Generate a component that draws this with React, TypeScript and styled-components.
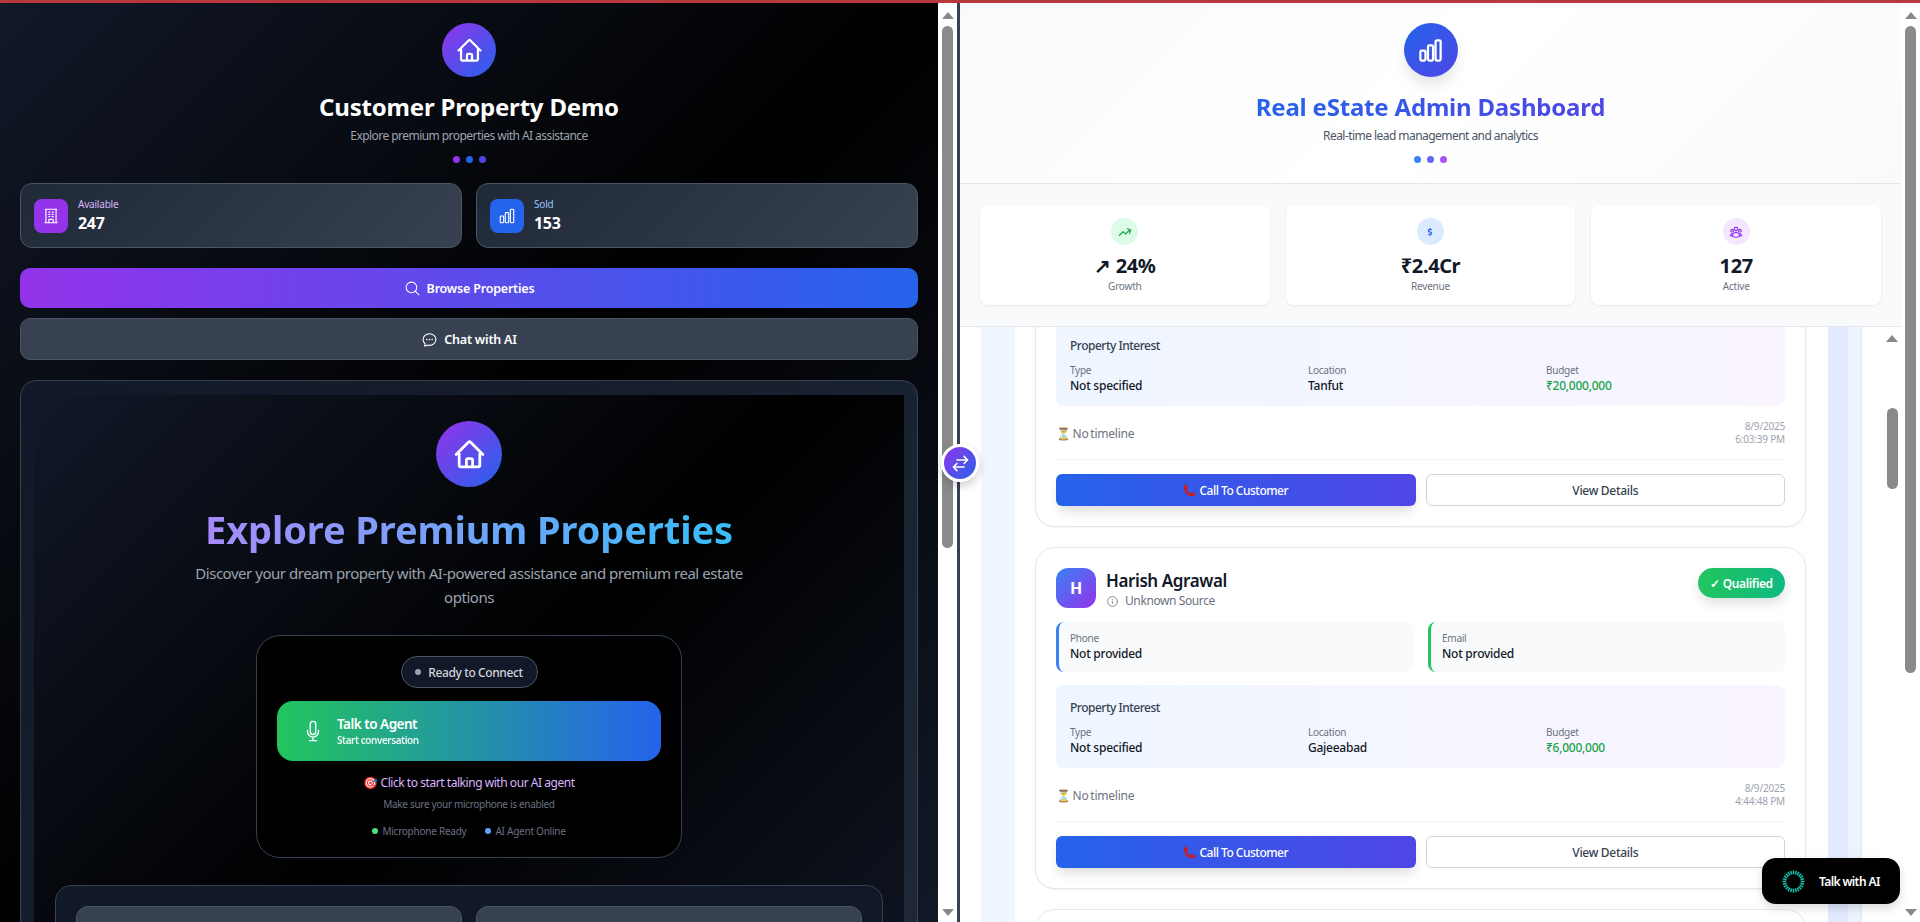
import React from 'react';
import styled, { createGlobalStyle } from 'styled-components';
import {
  HiOutlineHome,
  HiOutlineBuildingOffice,
  HiOutlineChartBar,
  HiOutlineMagnifyingGlass,
  HiOutlineChatBubbleOvalLeftEllipsis,
  HiOutlineMicrophone,
  HiOutlineArrowTrendingUp,
  HiOutlineUserGroup,
  HiOutlineInformationCircle,
  HiOutlineArrowsRightLeft,
  HiPhone,
} from 'react-icons/hi2';
import { FaDollarSign } from 'react-icons/fa';

const GlobalStyle = createGlobalStyle`
  html, body {
    margin: 0;
    height: 100%;
    overflow: hidden;
    background: #fff;
    font-family: "Noto Sans", "Open Sans", sans-serif;
  }
  * { box-sizing: border-box; }
`;

const Page = styled.div`
  position: relative;
  height: 922px;
  display: flex;
  flex-direction: column;
  overflow: hidden;
`;

const TopBar = styled.div`
  height: 3px;
  flex: none;
  background: #b9383e;
`;

const Split = styled.div`
  flex: 1;
  min-height: 0;
  display: flex;
`;

const DarkPane = styled.div`
  width: 938px;
  flex: none;
  overflow: hidden;
  padding: 20px 20px 0;
  background: linear-gradient(135deg, #111827 0%, #000 50%, #111827 100%);
`;

const Track = styled.div`
  width: 19px;
  flex: none;
  display: flex;
  flex-direction: column;
  align-items: center;
  background: #fff;
  padding: 9px 0 6px;
`;

const ArrowUp = styled.div`
  width: 0;
  height: 0;
  flex: none;
  border-left: 6.5px solid transparent;
  border-right: 6.5px solid transparent;
  border-bottom: 7px solid #8a8a8a;
`;

const ArrowDown = styled(ArrowUp)`
  border-bottom: 0;
  border-top: 7px solid #8a8a8a;
  margin-top: auto;
`;

const Thumb = styled.div<{ $top: number; $height: number }>`
  width: 11px;
  flex: none;
  margin-top: ${(p) => p.$top}px;
  height: ${(p) => p.$height}px;
  border-radius: 6px;
  background: #8a8a8a;
`;

const Divider = styled.div`
  width: 3px;
  flex: none;
  background: #374151;
`;

const LightPane = styled.div`
  flex: 1;
  min-width: 0;
  display: flex;
  flex-direction: column;
  background: #fff;
  overflow: hidden;
`;

const Hero = styled.header<{ $light?: boolean }>`
  display: flex;
  flex-direction: column;
  align-items: center;
  flex: none;
  ${(p) =>
    p.$light &&
    `
    height: 181px;
    padding-top: 20px;
    background: linear-gradient(135deg, #f9fafb 0%, #fff 50%, #f9fafb 100%);
    border-bottom: 1px solid #e5e7eb;
  `}
`;

const IconCircle = styled.div<{ $size: number }>`
  width: ${(p) => p.$size}px;
  height: ${(p) => p.$size}px;
  border-radius: 50%;
  display: flex;
  align-items: center;
  justify-content: center;
  color: #fff;
  flex: none;
  background: linear-gradient(135deg, #9333ea, #2563eb);
  svg {
    width: ${(p) => Math.round(p.$size * 0.5)}px;
    height: ${(p) => Math.round(p.$size * 0.5)}px;
    stroke-width: 2;
  }
`;

const BlueCircle = styled(IconCircle)`
  background: linear-gradient(135deg, #2563eb, #4f46e5);
  box-shadow: 0 10px 15px -3px rgba(0, 0, 0, 0.12);
`;

const HeroTitle = styled.h1`
  margin: 14px 0 0;
  font-size: 24px;
  line-height: 32px;
  font-weight: 700;
  letter-spacing: -0.2px;
  color: #fff;
`;

const BlueTitle = styled(HeroTitle)`
  background: linear-gradient(90deg, #2563eb, #4f46e5);
  -webkit-background-clip: text;
  background-clip: text;
  color: transparent;
`;

const HeroSub = styled.p<{ $light?: boolean }>`
  margin: 3px 0 0;
  font-size: 12px;
  line-height: 20px;
  letter-spacing: -0.55px;
  color: ${(p) => (p.$light ? '#4b5563' : '#9ca3af')};
`;

const Dots = styled.div`
  display: flex;
  gap: 6px;
  margin-top: 10px;
`;

const Dot = styled.span<{ $color: string; $size?: number }>`
  width: ${(p) => p.$size ?? 6}px;
  height: ${(p) => p.$size ?? 6}px;
  border-radius: 50%;
  flex: none;
  background: ${(p) => p.$color};
`;

const TwoCols = styled.div`
  display: grid;
  grid-template-columns: 1fr 1fr;
  gap: 14px;
`;

const StatRow = styled(TwoCols)`
  margin-top: 20px;
`;

const DarkStat = styled.div`
  height: 65px;
  display: flex;
  align-items: center;
  gap: 10px;
  padding: 0 13px;
  border: 1px solid #4b5563;
  border-radius: 12px;
  background: linear-gradient(135deg, #1f2937, #374151);
`;

const StatIcon = styled.div<{ $color: string }>`
  width: 34px;
  height: 34px;
  border-radius: 8px;
  display: flex;
  align-items: center;
  justify-content: center;
  color: #fff;
  background: ${(p) => p.$color};
  svg {
    width: 18px;
    height: 18px;
  }
`;

const StatLabel = styled.div<{ $color: string }>`
  font-size: 10px;
  line-height: 14px;
  letter-spacing: -0.2px;
  color: ${(p) => p.$color};
`;

const StatValue = styled.div`
  font-size: 16px;
  line-height: 24px;
  font-weight: 700;
  letter-spacing: -0.3px;
  color: #fff;
`;

const DarkButton = styled.button<{ $primary?: boolean }>`
  display: flex;
  width: 100%;
  align-items: center;
  justify-content: center;
  gap: 6px;
  font: inherit;
  font-size: 12.5px;
  font-weight: 600;
  letter-spacing: -0.2px;
  color: #fff;
  border-radius: 10px;
  height: ${(p) => (p.$primary ? '40px' : '42px')};
  margin-top: ${(p) => (p.$primary ? '20px' : '10px')};
  border: ${(p) => (p.$primary ? '0' : '1px solid #4b5563')};
  background: ${(p) => (p.$primary ? 'linear-gradient(90deg, #9333ea, #2563eb)' : '#374151')};
  svg {
    width: 17px;
    height: 17px;
  }
`;

const Showcase = styled.section`
  margin-top: 20px;
  padding: 14px 13px 0;
  border: 1px solid #374151;
  border-radius: 16px;
  background: linear-gradient(135deg, #111827, #1f2937);
`;

const ShowcaseInner = styled.div`
  padding: 26px 0 0;
  display: flex;
  flex-direction: column;
  align-items: center;
  background: linear-gradient(135deg, #111827 0%, #000 50%, #111827 100%);
`;

const BigTitle = styled.h2`
  margin: 17px 0 0;
  font-size: 38px;
  line-height: 50px;
  font-weight: 700;
  letter-spacing: -0.1px;
  background: linear-gradient(90deg, #a78bfa, #38bdf8);
  -webkit-background-clip: text;
  background-clip: text;
  color: transparent;
`;

const Lead = styled.p`
  margin: 7px 0 0;
  max-width: 600px;
  text-align: center;
  font-size: 15px;
  line-height: 24px;
  letter-spacing: -0.47px;
  color: #9ca3af;
`;

const ConnectPanel = styled.div`
  width: 426px;
  height: 223px;
  margin-top: 26px;
  padding: 20px;
  display: flex;
  flex-direction: column;
  align-items: center;
  border: 1px solid #374151;
  border-radius: 24px;
  background: #000;
`;

const StatusPill = styled.div`
  height: 32px;
  width: 137px;
  flex: none;
  display: flex;
  align-items: center;
  justify-content: center;
  gap: 7px;
  border: 1px solid #4b5563;
  border-radius: 16px;
  background: #111827;
  font-size: 12px;
  font-weight: 500;
  letter-spacing: -0.4px;
  color: #d1d5db;
`;

const TalkButton = styled.button`
  width: 384px;
  height: 60px;
  flex: none;
  margin-top: 13px;
  padding: 0 0 0 25px;
  display: flex;
  align-items: center;
  gap: 13px;
  border: 0;
  border-radius: 16px;
  font: inherit;
  color: #fff;
  text-align: left;
  background: linear-gradient(90deg, #22c55e, #2563eb);
  svg {
    width: 22px;
    height: 22px;
    flex: none;
  }
`;

const TalkTitle = styled.div`
  font-size: 13.5px;
  line-height: 18px;
  font-weight: 600;
  letter-spacing: -0.5px;
`;

const TalkSub = styled.div`
  font-size: 10px;
  line-height: 15px;
  font-weight: 600;
  letter-spacing: -0.45px;
  opacity: 0.9;
`;

const Hint = styled.div`
  margin-top: 12px;
  font-size: 12px;
  line-height: 20px;
  letter-spacing: -0.45px;
  color: #d8b4fe;
`;

const HintSub = styled.div`
  margin-top: 3px;
  font-size: 10px;
  line-height: 16px;
  letter-spacing: -0.32px;
  color: #6b7280;
`;

const StatusRow = styled.div`
  margin-top: 11px;
  display: flex;
  gap: 19px;
  font-size: 10px;
  line-height: 16px;
  letter-spacing: -0.25px;
  color: #6b7280;
`;

const StatusItem = styled.span`
  display: flex;
  align-items: center;
  gap: 4px;
`;

const DemoCard = styled.div`
  align-self: stretch;
  margin: 27px 21px 0;
  padding: 20px;
  height: 200px;
  border: 1px solid #374151;
  border-radius: 16px;
  background: #111827;
`;

const DemoTile = styled.div`
  height: 160px;
  padding: 13px 15px;
  border: 1px solid #4b5563;
  border-radius: 12px;
  background: #374151;
`;

const LightStats = styled.div`
  flex: none;
  height: 143px;
  padding: 21px 20px 0;
  display: grid;
  grid-template-columns: repeat(3, 1fr);
  gap: 16px;
  background: #f9fafb;
  border-bottom: 1px solid #e5e7eb;
`;

const LightStat = styled.div`
  height: 100px;
  display: flex;
  flex-direction: column;
  align-items: center;
  padding-top: 13px;
  background: #fff;
  border-radius: 8px;
  box-shadow: 0 1px 3px rgba(0, 0, 0, 0.08);
`;

const LightStatIcon = styled.div<{ $bg: string; $color: string }>`
  width: 27px;
  height: 27px;
  border-radius: 50%;
  display: flex;
  align-items: center;
  justify-content: center;
  background: ${(p) => p.$bg};
  color: ${(p) => p.$color};
  svg {
    stroke-width: 2;
  }
`;

const LightValue = styled.div`
  margin-top: 7px;
  font-size: 20px;
  line-height: 27px;
  font-weight: 700;
  letter-spacing: -0.4px;
  color: #111827;
`;

const LightLabel = styled.div`
  font-size: 10px;
  line-height: 14px;
  letter-spacing: -0.2px;
  color: #6b7280;
`;

const LeadsArea = styled.div`
  flex: 1;
  min-height: 0;
  display: flex;
  overflow: hidden;
`;

const LeadsBackdrop = styled.div`
  width: 881px;
  margin-left: 21px;
  flex: none;
  display: flex;
  padding: 0 14px 0 34px;
  border-right: 1px solid #dbeafe;
  background: linear-gradient(90deg, #eff6ff, #eef2ff);
`;

const LeadsSheet = styled.div`
  width: 813px;
  flex: none;
  padding: 0 22px 0 20px;
  background: #fff;
`;

const SheetShade = styled.div`
  width: 20px;
  flex: none;
  background: #e3e9fe;
`;

const LeadCard = styled.article<{ $clipped?: boolean }>`
  padding: 20px;
  margin-top: ${(p) => (p.$clipped ? '-25px' : '20px')};
  border: 1px solid #e5e7eb;
  border-radius: 20px;
  background: #fff;
  box-shadow: 0 1px 2px rgba(0, 0, 0, 0.05);
`;

const LeadHead = styled.div`
  display: flex;
  align-items: flex-start;
  gap: 10px;
  height: 54px;
`;

const Avatar = styled.div`
  width: 40px;
  height: 40px;
  border-radius: 12px;
  display: flex;
  align-items: center;
  justify-content: center;
  font-size: 16px;
  font-weight: 700;
  color: #fff;
  background: linear-gradient(135deg, #3b82f6, #9333ea);
`;

const LeadName = styled.div`
  margin-top: 1px;
  font-size: 17px;
  line-height: 24px;
  font-weight: 600;
  letter-spacing: -0.4px;
  color: #111827;
`;

const LeadSource = styled.div`
  margin-top: -1px;
  display: flex;
  align-items: center;
  gap: 6px;
  font-size: 12px;
  line-height: 18px;
  letter-spacing: -0.4px;
  color: #6b7280;
`;

const QualifiedBadge = styled.div`
  margin-left: auto;
  height: 30px;
  width: 87px;
  display: flex;
  align-items: center;
  justify-content: center;
  border-radius: 15px;
  font-size: 12px;
  font-weight: 600;
  letter-spacing: -0.35px;
  color: #fff;
  background: linear-gradient(90deg, #22c55e, #10b981);
  box-shadow: 0 6px 12px rgba(0, 0, 0, 0.12);
`;

const ContactRow = styled.div`
  display: grid;
  grid-template-columns: 1fr 1fr;
  gap: 15px;
  margin-bottom: 13px;
`;

const ContactBox = styled.div<{ $accent: string }>`
  height: 50px;
  padding: 9px 11px;
  border-left: 3px solid ${(p) => p.$accent};
  border-radius: 8px;
  background: #f9fafb;
`;

const SmallLabel = styled.div`
  font-size: 10px;
  line-height: 15px;
  letter-spacing: -0.25px;
  color: #6b7280;
`;

const FieldValue = styled.div<{ $green?: boolean }>`
  font-size: 12px;
  line-height: 16px;
  font-weight: 500;
  letter-spacing: -0.25px;
  color: ${(p) => (p.$green ? '#16a34a' : '#111827')};
`;

const InterestPanel = styled.div`
  height: 83px;
  padding: 14px 14px;
  border-radius: 8px;
  background: linear-gradient(90deg, #eff6ff, #faf5ff);
`;

const InterestTitle = styled.div`
  font-size: 12px;
  line-height: 18px;
  font-weight: 500;
  letter-spacing: -0.5px;
  color: #374151;
`;

const InterestGrid = styled.div`
  margin-top: 8px;
  display: grid;
  grid-template-columns: repeat(3, 1fr);
  gap: 13px;
`;

const TimelineRow = styled.div`
  height: 54px;
  display: flex;
  align-items: center;
  justify-content: space-between;
  border-bottom: 1px solid #f3f4f6;
`;

const Timeline = styled.div`
  margin-top: 2px;
  font-size: 12px;
  letter-spacing: -0.25px;
  word-spacing: -1px;
  color: #6b7280;
`;

const Stamp = styled.div`
  font-size: 10px;
  line-height: 13px;
  text-align: right;
  letter-spacing: -0.2px;
  color: #9ca3af;
`;

const ActionRow = styled.div`
  margin-top: 14px;
  display: grid;
  grid-template-columns: 1fr 1fr;
  gap: 10px;
`;

const CallButton = styled.button`
  height: 32px;
  border: 0;
  border-radius: 6px;
  display: flex;
  align-items: center;
  justify-content: center;
  gap: 3px;
  font: inherit;
  font-size: 12px;
  font-weight: 500;
  letter-spacing: -0.5px;
  color: #fff;
  background: linear-gradient(90deg, #2563eb, #4f46e5);
  box-shadow: 0 8px 12px -3px rgba(0, 0, 0, 0.14);
  svg {
    color: #c81e1e;
    width: 13px;
    height: 13px;
  }
`;

const DetailsButton = styled.button`
  height: 32px;
  border: 1px solid #d1d5db;
  border-radius: 6px;
  font: inherit;
  font-size: 12px;
  font-weight: 500;
  letter-spacing: -0.3px;
  color: #374151;
  background: #fff;
`;

const SwapButton = styled.button`
  position: absolute;
  left: 941px;
  top: 444px;
  width: 38px;
  height: 38px;
  padding: 0;
  border: 3px solid #fff;
  border-radius: 50%;
  display: flex;
  align-items: center;
  justify-content: center;
  color: #fff;
  background: linear-gradient(135deg, #9333ea, #2563eb);
  box-shadow: 0 4px 10px rgba(0, 0, 0, 0.2);
  svg {
    width: 19px;
    height: 19px;
    stroke-width: 2;
  }
`;

const TalkWidget = styled.div`
  position: absolute;
  left: 1762px;
  top: 858px;
  width: 138px;
  height: 46px;
  display: flex;
  align-items: center;
  gap: 14px;
  padding-left: 20px;
  border-radius: 14px;
  background: #000;
  font-size: 12px;
  font-weight: 600;
  letter-spacing: -0.6px;
  color: #fff;
  box-shadow: 0 4px 10px rgba(0, 0, 0, 0.15);
`;

const ScrollRail = styled.div`
  width: 12px;
  margin-left: 24px;
  flex: none;
  display: flex;
  flex-direction: column;
  align-items: center;
  padding-top: 8px;
`;

const Spinner = () => (
  <svg width="23" height="23" viewBox="0 0 23 23">
    {Array.from({ length: 24 }).map((_, i) => (
      <rect key={i} x="10.7" y="0.5" width="1.6" height="3.8" fill="#14b8a6" transform={`rotate(${i * 15} 11.5 11.5)`} />
    ))}
  </svg>
);

type Lead = {
  location: string;
  budget: string;
  date: string;
  time: string;
};

const LeadBody = ({ location, budget, date, time }: Lead) => (
  <>
    <InterestPanel>
      <InterestTitle>Property Interest</InterestTitle>
      <InterestGrid>
        <div>
          <SmallLabel>Type</SmallLabel>
          <FieldValue>Not specified</FieldValue>
        </div>
        <div>
          <SmallLabel>Location</SmallLabel>
          <FieldValue>{location}</FieldValue>
        </div>
        <div>
          <SmallLabel>Budget</SmallLabel>
          <FieldValue $green>{budget}</FieldValue>
        </div>
      </InterestGrid>
    </InterestPanel>
    <TimelineRow>
      <Timeline>⏳ No timeline</Timeline>
      <Stamp>
        {date}
        <br />
        {time}
      </Stamp>
    </TimelineRow>
    <ActionRow>
      <CallButton>
        <HiPhone />
        Call To Customer
      </CallButton>
      <DetailsButton>View Details</DetailsButton>
    </ActionRow>
  </>
);

export default function App() {
  return (
    <Page>
      <GlobalStyle />
      <TopBar />
      <Split>
        <DarkPane>
          <Hero>
            <IconCircle $size={54}>
              <HiOutlineHome />
            </IconCircle>
            <HeroTitle>Customer Property Demo</HeroTitle>
            <HeroSub>Explore premium properties with AI assistance</HeroSub>
            <Dots>
              <Dot $size={7} $color="#9333ea" />
              <Dot $size={7} $color="#2563eb" />
              <Dot $size={7} $color="#4f46e5" />
            </Dots>
          </Hero>
          <StatRow>
            <DarkStat>
              <StatIcon $color="#9333ea">
                <HiOutlineBuildingOffice />
              </StatIcon>
              <div>
                <StatLabel $color="#d8b4fe">Available</StatLabel>
                <StatValue>247</StatValue>
              </div>
            </DarkStat>
            <DarkStat>
              <StatIcon $color="#2563eb">
                <HiOutlineChartBar />
              </StatIcon>
              <div>
                <StatLabel $color="#93c5fd">Sold</StatLabel>
                <StatValue>153</StatValue>
              </div>
            </DarkStat>
          </StatRow>
          <DarkButton $primary>
            <HiOutlineMagnifyingGlass />
            Browse Properties
          </DarkButton>
          <DarkButton>
            <HiOutlineChatBubbleOvalLeftEllipsis />
            Chat with AI
          </DarkButton>
          <Showcase>
            <ShowcaseInner>
              <IconCircle $size={66}>
                <HiOutlineHome />
              </IconCircle>
              <BigTitle>Explore Premium Properties</BigTitle>
              <Lead>Discover your dream property with AI-powered assistance and premium real estate options</Lead>
              <ConnectPanel>
                <StatusPill>
                  <Dot $color="#9ca3af" />
                  Ready to Connect
                </StatusPill>
                <TalkButton>
                  <HiOutlineMicrophone />
                  <div>
                    <TalkTitle>Talk to Agent</TalkTitle>
                    <TalkSub>Start conversation</TalkSub>
                  </div>
                </TalkButton>
                <Hint>🎯 Click to start talking with our AI agent</Hint>
                <HintSub>Make sure your microphone is enabled</HintSub>
                <StatusRow>
                  <StatusItem>
                    <Dot $color="#4ade80" />
                    Microphone Ready
                  </StatusItem>
                  <StatusItem>
                    <Dot $color="#60a5fa" />
                    AI Agent Online
                  </StatusItem>
                </StatusRow>
              </ConnectPanel>
              <DemoCard>
                <TwoCols>
                  <DemoTile>
                    <Dot $size={5} $color="#9ca3af" />
                  </DemoTile>
                  <DemoTile />
                </TwoCols>
              </DemoCard>
            </ShowcaseInner>
          </Showcase>
        </DarkPane>
        <Track>
          <ArrowUp />
          <Thumb $top={7} $height={522} />
          <ArrowDown />
        </Track>
        <Divider />
        <LightPane>
          <Hero $light>
            <BlueCircle $size={54}>
              <HiOutlineChartBar />
            </BlueCircle>
            <BlueTitle>Real eState Admin Dashboard</BlueTitle>
            <HeroSub $light>Real-time lead management and analytics</HeroSub>
            <Dots>
              <Dot $size={7} $color="#3b82f6" />
              <Dot $size={7} $color="#6366f1" />
              <Dot $size={7} $color="#a855f7" />
            </Dots>
          </Hero>
          <LightStats>
            <LightStat>
              <LightStatIcon $bg="#dcfce7" $color="#16a34a">
                <HiOutlineArrowTrendingUp size={14} />
              </LightStatIcon>
              <LightValue>↗ 24%</LightValue>
              <LightLabel>Growth</LightLabel>
            </LightStat>
            <LightStat>
              <LightStatIcon $bg="#dbeafe" $color="#2563eb">
                <FaDollarSign size={8} />
              </LightStatIcon>
              <LightValue>₹2.4Cr</LightValue>
              <LightLabel>Revenue</LightLabel>
            </LightStat>
            <LightStat>
              <LightStatIcon $bg="#f3e8ff" $color="#9333ea">
                <HiOutlineUserGroup size={14} />
              </LightStatIcon>
              <LightValue>127</LightValue>
              <LightLabel>Active</LightLabel>
            </LightStat>
          </LightStats>
          <LeadsArea>
            <LeadsBackdrop>
              <LeadsSheet>
                <LeadCard $clipped>
                  <LeadBody location="Tanfut" budget="₹20,000,000" date="8/9/2025" time="6:03:39 PM" />
                </LeadCard>
                <LeadCard>
                  <LeadHead>
                    <Avatar>H</Avatar>
                    <div>
                      <LeadName>Harish Agrawal</LeadName>
                      <LeadSource>
                        <HiOutlineInformationCircle size={13} />
                        Unknown Source
                      </LeadSource>
                    </div>
                    <QualifiedBadge>✓ Qualified</QualifiedBadge>
                  </LeadHead>
                  <ContactRow>
                    <ContactBox $accent="#3b82f6">
                      <SmallLabel>Phone</SmallLabel>
                      <FieldValue>Not provided</FieldValue>
                    </ContactBox>
                    <ContactBox $accent="#22c55e">
                      <SmallLabel>Email</SmallLabel>
                      <FieldValue>Not provided</FieldValue>
                    </ContactBox>
                  </ContactRow>
                  <LeadBody location="Gajeeabad" budget="₹6,000,000" date="8/9/2025" time="4:44:48 PM" />
                </LeadCard>
                <LeadCard />
              </LeadsSheet>
              <SheetShade />
            </LeadsBackdrop>
            <ScrollRail>
              <ArrowUp />
              <Thumb $top={66} $height={81} />
            </ScrollRail>
          </LeadsArea>
        </LightPane>
        <Track>
          <ArrowUp />
          <Thumb $top={7} $height={647} />
          <ArrowDown />
        </Track>
      </Split>
      <SwapButton>
        <HiOutlineArrowsRightLeft />
      </SwapButton>
      <TalkWidget>
        <Spinner />
        Talk with AI
      </TalkWidget>
    </Page>
  );
}
